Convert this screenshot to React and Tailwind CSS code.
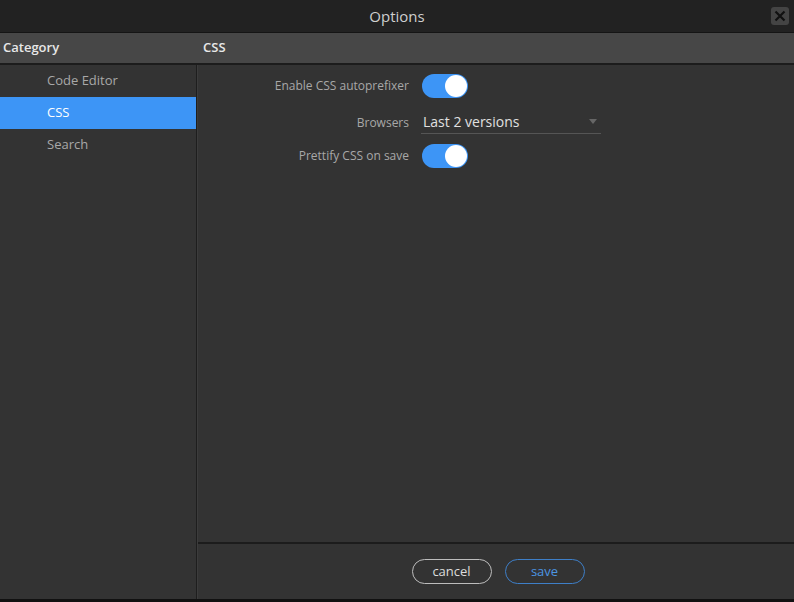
import React, { useState } from 'react';

function Toggle({ on }) {
  return (
    <div className={`w-[46px] h-[24px] rounded-full relative ${on ? 'bg-[#3d95f6]' : 'bg-[#555]'}`}>
      <div className={`absolute top-px w-[22px] h-[22px] rounded-full bg-white ${on ? 'right-px' : 'left-px'}`} />
    </div>
  );
}

export default function App() {
  const [selected, setSelected] = useState('CSS');
  const categories = ['Code Editor', 'CSS', 'Search'];

  return (
    <div className="w-[794px] h-[602px] bg-[#111] flex flex-col text-[13px] font-['Open_Sans','Noto_Sans',sans-serif] overflow-hidden">
      {/* Title bar */}
      <div className="h-[33px] bg-[#222] flex items-center justify-center relative border-b border-[#151515] shrink-0">
        <span className="text-[15px] text-[#cfcfcf]">Options</span>
        <button className="absolute right-[5px] top-[7px] w-[18px] h-[18px] rounded-[3px] bg-[#444] flex items-center justify-center">
          <svg width="12" height="12" viewBox="0 0 12 12">
            <path d="M1.5 1.5 L10.5 10.5 M10.5 1.5 L1.5 10.5" stroke="#111" strokeWidth="2.2" />
          </svg>
        </button>
      </div>

      {/* Header row */}
      <div className="h-[32px] bg-[#474747] flex items-center border-b-2 border-[#1c1c1c] shrink-0">
        <div className="w-[198px] pl-[3px] text-[#e8e8e8] font-semibold">Category</div>
        <div className="pl-[5px] text-[#e8e8e8] font-semibold">CSS</div>
      </div>

      <div className="flex flex-1 min-h-0 mb-[3px]">
        {/* Sidebar */}
        <div className="w-[197px] bg-[#333] border-r border-[#1e1e1e] shrink-0">
          {categories.map((c) => (
            <div
              key={c}
              onClick={() => setSelected(c)}
              className={`h-[32px] pl-[47px] flex items-center cursor-pointer ${
                selected === c ? 'bg-[#3d95f6] text-white' : 'text-[#a8a8a8]'
              }`}
            >
              {c}
            </div>
          ))}
        </div>

        {/* Content */}
        <div className="flex-1 flex flex-col bg-[#333] border-l border-[#3c3c3c]">
          <div className="flex-1 pt-[9px]">
            <div className="grid grid-cols-[211px_auto] gap-x-[12px] gap-y-[10px] items-center">
              <div className="text-right text-[12px] text-[#a8a8a8]">Enable CSS autoprefixer</div>
              <div className="pl-px"><Toggle on /></div>

              <div className="text-right text-[12px] text-[#a8a8a8] pt-[4px]">Browsers</div>
              <div className="w-[180px] h-[26px] border-b border-[#555] flex items-end justify-between pb-[1px] pl-[2px] pr-[4px]">
                <span className="text-[14px] leading-[20px] text-[#e0e0e0]">Last 2 versions</span>
                <svg className="mb-[8px]" width="8" height="5" viewBox="0 0 8 5"><path d="M0 0 L8 0 L4 5 Z" fill="#666" /></svg>
              </div>

              <div className="text-right text-[12px] text-[#a8a8a8]">Prettify CSS on save</div>
              <div className="pl-px"><Toggle on /></div>
            </div>
          </div>

          {/* Footer */}
          <div className="h-[57px] border-t-2 border-[#1c1c1c] flex items-center justify-center gap-[13px] shrink-0 pl-[4px]">
            <button className="w-[80px] h-[25px] rounded-full border border-[#bdbdbd] text-[#ddd] text-[13px] leading-none">cancel</button>
            <button className="w-[80px] h-[25px] rounded-full border border-[#3e7fc8] text-[#4c95e2] text-[13px] leading-none">save</button>
          </div>
        </div>
      </div>
    </div>
  );
}
